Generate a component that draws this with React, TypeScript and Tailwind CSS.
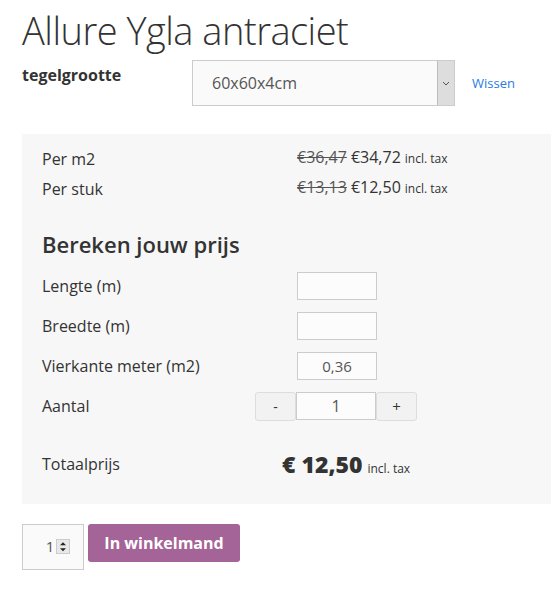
export default function App() {
  return (
    <div className="min-h-[591px] bg-white text-[#333] pl-[22px] pr-[8px]" style={{ fontFamily: '"Open Sans", "Noto Sans", sans-serif' }}>
      <h1 className="pt-[6px] text-[38px] font-light leading-[48px] tracking-[-0.5px]">Allure Ygla antraciet</h1>

      <div className="mt-[6px] flex items-start">
        <div className="w-[170px] pt-[4px] text-[16px] font-bold leading-[22px]">tegelgrootte</div>
        <div className="flex h-[46px] w-[263px] border border-[#ccc] bg-[#fafafa]">
          <div className="flex flex-1 items-center pl-[19px] text-[16px] text-[#555]">60x60x4cm</div>
          <div className="flex w-[17px] items-center justify-center border-l border-[#bbb] bg-[#ddd]">
            <svg width="8" height="5" viewBox="0 0 8 5" fill="none" stroke="#555" strokeWidth="1">
              <path d="M1 1l3 3 3-3" />
            </svg>
          </div>
        </div>
        <a className="ml-[17px] mt-[14px] text-[13px] leading-[18px] text-[#2a7ae2]">Wissen</a>
      </div>

      <div className="mt-[28px] bg-[#f7f7f7] px-[20px] pt-[10px] pb-[22px]">
        <div className="flex h-[30px] items-center text-[16px]">
          <div className="w-[255px]">Per m2</div>
          <div className="-mt-[4px] flex items-baseline gap-[4px]">
            <span className="text-[#555] line-through">€36,47</span>
            <span>€34,72</span>
            <span className="text-[12px]">incl. tax</span>
          </div>
        </div>
        <div className="flex h-[30px] items-center text-[16px]">
          <div className="w-[255px]">Per stuk</div>
          <div className="-mt-[4px] flex items-baseline gap-[4px]">
            <span className="text-[#555] line-through">€13,13</span>
            <span>€12,50</span>
            <span className="text-[12px]">incl. tax</span>
          </div>
        </div>

        <h2 className="mt-[25px] text-[22px] font-semibold leading-[30px]">Bereken jouw prijs</h2>

        <div className="mt-[13px] flex flex-col gap-[12px] text-[16px]">
          <div className="flex h-[28px] items-center">
            <div className="w-[255px]">Lengte (m)</div>
            <div className="h-[28px] w-[80px] border border-[#ccc] bg-[#fcfcfc]" />
          </div>
          <div className="flex h-[28px] items-center">
            <div className="w-[255px]">Breedte (m)</div>
            <div className="h-[28px] w-[80px] border border-[#ccc] bg-[#fcfcfc]" />
          </div>
          <div className="flex h-[28px] items-center">
            <div className="w-[255px]">Vierkante meter (m2)</div>
            <div className="flex h-[28px] w-[80px] items-center justify-center border border-[#ccc] bg-[#fcfcfc] text-[15px] text-[#555]">0,36</div>
          </div>
          <div className="flex h-[28px] items-center">
            <div className="w-[213px]">Aantal</div>
            <div className="flex items-center">
              <div className="flex h-[29px] w-[41px] items-center justify-center rounded-[3px] border border-[#ddd] bg-[#f2f2f2] text-[14px]">-</div>
              <div className="flex h-[28px] w-[80px] items-center justify-center border border-[#ccc] bg-[#fcfcfc] text-[16px] text-[#555]">1</div>
              <div className="flex h-[29px] w-[41px] items-center justify-center rounded-[3px] border border-[#ddd] bg-[#f2f2f2] text-[15px]">+</div>
            </div>
          </div>
        </div>

        <div className="mt-[27px] flex items-center">
          <div className="w-[240px] text-[16px]">Totaalprijs</div>
          <div className="flex items-baseline gap-[5px]">
            <span className="text-[23px] font-extrabold">€ 12,50</span>
            <span className="text-[12px]">incl. tax</span>
          </div>
        </div>
      </div>

      <div className="mt-[20px] flex items-start gap-[4px]">
        <div className="flex h-[46px] w-[62px] items-center justify-center gap-[2px] border border-[#ccc] bg-[#fafafa]">
          <span className="pl-[10px] text-[15px] text-[#555]">1</span>
          <div className="flex h-[15px] w-[14px] flex-col border border-[#ccc] bg-[#e8e8e8]">
            <svg className="flex-1" viewBox="0 0 12 6" fill="#222"><path d="M3 5h6L6 2z" /></svg>
            <svg className="flex-1" viewBox="0 0 12 6" fill="#222"><path d="M3 1h6L6 4z" /></svg>
          </div>
        </div>
        <button className="h-[38px] w-[152px] rounded-[3px] bg-[#a46497] text-[16px] font-bold text-white">In winkelmand</button>
      </div>
    </div>
  );
}
